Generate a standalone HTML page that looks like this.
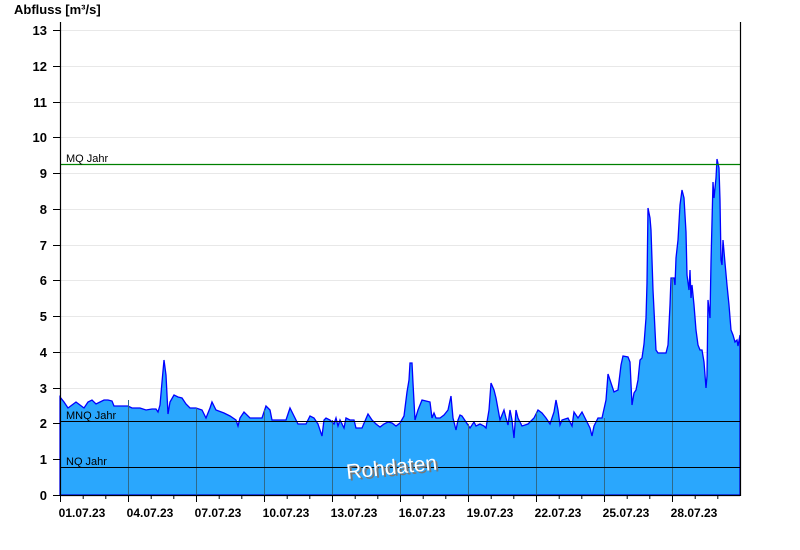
<!DOCTYPE html>
<html><head><meta charset="utf-8"><style>
html,body{margin:0;padding:0;background:#fff;width:800px;height:550px;overflow:hidden}
svg{display:block}
text{font-family:"Liberation Sans",Arial,sans-serif}
</style></head><body>
<svg width="800" height="550" viewBox="0 0 800 550" xmlns="http://www.w3.org/2000/svg">
<g stroke="#e8e8e8" stroke-width="1">
<line x1="60" y1="30.5" x2="740" y2="30.5"/><line x1="60" y1="66.5" x2="740" y2="66.5"/>
<line x1="60" y1="102.5" x2="740" y2="102.5"/><line x1="60" y1="137.5" x2="740" y2="137.5"/>
<line x1="60" y1="173.5" x2="740" y2="173.5"/><line x1="60" y1="209.5" x2="740" y2="209.5"/>
<line x1="60" y1="245.5" x2="740" y2="245.5"/><line x1="60" y1="280.5" x2="740" y2="280.5"/>
<line x1="60" y1="316.5" x2="740" y2="316.5"/><line x1="60" y1="352.5" x2="740" y2="352.5"/>
<line x1="60" y1="388.5" x2="740" y2="388.5"/><line x1="60" y1="423.5" x2="740" y2="423.5"/>
<line x1="60" y1="459.5" x2="740" y2="459.5"/>
</g>
<polygon fill="#2aa7fd" stroke="#0000ff" stroke-width="1.3" stroke-linejoin="miter" points="60,495 60,397 64,402 68,408 72,405 76,402 80,405 84,408 88,402 92,400 96,404 100,402 104,400 108,400 112,401 114,406 118,406 124,406 128,406 132,408 140,408 146,410 152,409 156,409 158,412 160,405 162,382 164,360 166,375 168,414 170,402 174,395 178,397 182,398 186,404 190,408 196,408 202,410 206,418 210,408 212,402 216,410 224,413 230,416 236,420 238,426 240,418 244,412 250,418 256,418 262,418 266,406 270,410 272,420 280,420 286,420 290,408 294,416 298,424 306,424 310,416 314,418 318,424 322,436 324,420 326,418 330,420 334,424 336,418 338,426 340,420 344,428 346,418 350,420 354,420 356,428 362,428 368,414 372,420 376,424 380,427 384,424 388,422 392,423 396,426 400,423 404,416 407,392 409,380 410,363 412,363 413,383 415,420 418,410 422,400 426,401 430,402 432,418 434,413 436,418 440,418 444,415 448,410 451,396 453,418 456,430 458,420 460,415 462,416 466,422 470,428 474,422 476,426 480,424 484,426 486,428 489,410 491,383 494,390 496,398 500,420 504,410 506,418 508,425 510,410 512,420 514,438 516,410 518,418 522,426 528,424 534,418 538,410 542,413 546,418 550,424 554,412 556,400 558,410 560,425 562,420 568,418 572,426 574,412 578,418 582,412 586,420 590,428 592,436 594,426 598,418 602,418 606,400 608,374 610,380 614,392 618,390 621,365 623,356 628,357 630,362 632,405 634,393 636,390 638,380 640,360 642,358 644,344 646,318 647,283 648,208 650,218 651,230 653,290 656,350 658,353 666,353 668,345 670,305 671,278 674,278 675,285 676,258 678,240 680,205 682,190 684,198 686,232 687,275 689,290 690,270 691,298 692,285 694,305 696,330 698,345 700,350 702,350 704,362 706,388 707,376 708,300 710,318 711,262 713,182 714,198 716,178 717,159 719,168 720,200 721,260 722,265 723,240 725,263 727,285 729,305 731,330 733,335 735,342 737,340 738,346 740,335 740,495"/>
<g stroke="#2e6a8a" stroke-width="1">
<line x1="128.5" y1="400" x2="128.5" y2="495"/><line x1="196.5" y1="408" x2="196.5" y2="495"/>
<line x1="264.5" y1="410" x2="264.5" y2="495"/><line x1="332.5" y1="420" x2="332.5" y2="495"/>
<line x1="400.5" y1="424" x2="400.5" y2="495"/><line x1="468.5" y1="424" x2="468.5" y2="495"/>
<line x1="536.5" y1="412" x2="536.5" y2="495"/><line x1="604.5" y1="418" x2="604.5" y2="495"/>
<line x1="672.5" y1="278" x2="672.5" y2="495"/>
</g>
<line x1="60" y1="164.5" x2="740" y2="164.5" stroke="#008000" stroke-width="1.3"/>
<line x1="60" y1="421.5" x2="740" y2="421.5" stroke="#000" stroke-width="1"/>
<line x1="60" y1="467.5" x2="740" y2="467.5" stroke="#000" stroke-width="1"/>
<g font-size="11" fill="#000">
<text x="66" y="162">MQ Jahr</text>
<text x="66" y="419">MNQ Jahr</text>
<text x="66" y="465">NQ Jahr</text>
</g>
<g stroke="#000" stroke-width="1.2">
<line x1="60.5" y1="22" x2="60.5" y2="496"/>
<line x1="740.5" y1="22" x2="740.5" y2="496"/>
<line x1="60" y1="495.5" x2="740" y2="495.5"/>
</g>
<g stroke="#000" stroke-width="1">
<line x1="53" y1="30.5" x2="60" y2="30.5"/><line x1="53" y1="66.5" x2="60" y2="66.5"/>
<line x1="53" y1="102.5" x2="60" y2="102.5"/><line x1="53" y1="137.5" x2="60" y2="137.5"/>
<line x1="53" y1="173.5" x2="60" y2="173.5"/><line x1="53" y1="209.5" x2="60" y2="209.5"/>
<line x1="53" y1="245.5" x2="60" y2="245.5"/><line x1="53" y1="280.5" x2="60" y2="280.5"/>
<line x1="53" y1="316.5" x2="60" y2="316.5"/><line x1="53" y1="352.5" x2="60" y2="352.5"/>
<line x1="53" y1="388.5" x2="60" y2="388.5"/><line x1="53" y1="423.5" x2="60" y2="423.5"/>
<line x1="53" y1="459.5" x2="60" y2="459.5"/><line x1="53" y1="495.5" x2="60" y2="495.5"/>
<line x1="60.5" y1="495" x2="60.5" y2="502"/><line x1="83.2" y1="495" x2="83.2" y2="499"/><line x1="105.8" y1="495" x2="105.8" y2="499"/>
<line x1="128.5" y1="495" x2="128.5" y2="502"/><line x1="151.2" y1="495" x2="151.2" y2="499"/><line x1="173.8" y1="495" x2="173.8" y2="499"/>
<line x1="196.5" y1="495" x2="196.5" y2="502"/><line x1="219.2" y1="495" x2="219.2" y2="499"/><line x1="241.8" y1="495" x2="241.8" y2="499"/>
<line x1="264.5" y1="495" x2="264.5" y2="502"/><line x1="287.2" y1="495" x2="287.2" y2="499"/><line x1="309.8" y1="495" x2="309.8" y2="499"/>
<line x1="332.5" y1="495" x2="332.5" y2="502"/><line x1="355.2" y1="495" x2="355.2" y2="499"/><line x1="377.8" y1="495" x2="377.8" y2="499"/>
<line x1="400.5" y1="495" x2="400.5" y2="502"/><line x1="423.2" y1="495" x2="423.2" y2="499"/><line x1="445.8" y1="495" x2="445.8" y2="499"/>
<line x1="468.5" y1="495" x2="468.5" y2="502"/><line x1="491.2" y1="495" x2="491.2" y2="499"/><line x1="513.8" y1="495" x2="513.8" y2="499"/>
<line x1="536.5" y1="495" x2="536.5" y2="502"/><line x1="559.2" y1="495" x2="559.2" y2="499"/><line x1="581.8" y1="495" x2="581.8" y2="499"/>
<line x1="604.5" y1="495" x2="604.5" y2="502"/><line x1="627.2" y1="495" x2="627.2" y2="499"/><line x1="649.8" y1="495" x2="649.8" y2="499"/>
<line x1="672.5" y1="495" x2="672.5" y2="502"/><line x1="695.2" y1="495" x2="695.2" y2="499"/><line x1="717.8" y1="495" x2="717.8" y2="499"/>
</g>
<text x="14" y="14" font-size="13" font-weight="bold">Abfluss [m³/s]</text>
<g font-size="13" font-weight="bold" text-anchor="end">
<text x="47" y="35">13</text><text x="47" y="71">12</text><text x="47" y="107">11</text>
<text x="47" y="142">10</text><text x="47" y="178">9</text><text x="47" y="214">8</text>
<text x="47" y="250">7</text><text x="47" y="285">6</text><text x="47" y="321">5</text>
<text x="47" y="357">4</text><text x="47" y="393">3</text><text x="47" y="428">2</text>
<text x="47" y="464">1</text><text x="47" y="500">0</text>
</g>
<g font-size="12" font-weight="bold" text-anchor="middle">
<text x="82" y="517">01.07.23</text><text x="150" y="517">04.07.23</text>
<text x="218" y="517">07.07.23</text><text x="286" y="517">10.07.23</text>
<text x="354" y="517">13.07.23</text><text x="422" y="517">16.07.23</text>
<text x="490" y="517">19.07.23</text><text x="558" y="517">22.07.23</text>
<text x="626" y="517">25.07.23</text><text x="694" y="517">28.07.23</text>
</g>
<g transform="translate(347,479) rotate(-6)" font-size="21">
<text x="2" y="2" fill="#777">Rohdaten</text>
<text x="0" y="0" fill="#fff">Rohdaten</text>
</g>
</svg>
</body></html>
